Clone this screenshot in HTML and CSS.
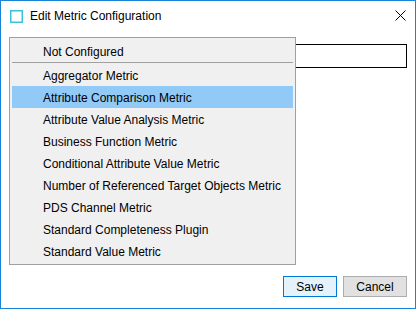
FILE: index.html
```html
<!DOCTYPE html>
<html lang="en">
<head>
    <meta charset="UTF-8">
    <meta name="viewport" content="width=device-width, initial-scale=1.0">
    <title>Edit Metric Configuration</title>
    <link rel="stylesheet" href="styles.css">
</head>
<body>
    <div class="window">
        <div class="titlebar">
            <svg class="app-icon" width="13" height="13" viewBox="0 0 13 13">
                <rect x="0.75" y="0.75" width="11.5" height="11.5" fill="none" stroke="#3cc3da" stroke-width="1.5"/>
            </svg>
            <span class="title">Edit Metric Configuration</span>
            <svg class="close-icon" width="11" height="11" viewBox="0 0 11 11">
                <path d="M0.5 0.5 L10.5 10.5 M10.5 0.5 L0.5 10.5" stroke="#000" stroke-width="1" fill="none"/>
            </svg>
        </div>

        <div class="content">
            <div class="metric-field"></div>
        </div>

        <div class="footer">
            <button type="button" class="btn btn-default">Save</button>
            <button type="button" class="btn">Cancel</button>
        </div>

        <!-- open dropdown of the metric field -->
        <ul class="menu">
            <li class="menu-item">Not Configured</li>
            <li class="menu-separator"></li>
            <li class="menu-item">Aggregator Metric</li>
            <li class="menu-item selected">Attribute Comparison Metric</li>
            <li class="menu-item">Attribute Value Analysis Metric</li>
            <li class="menu-item">Business Function Metric</li>
            <li class="menu-item">Conditional Attribute Value Metric</li>
            <li class="menu-item">Number of Referenced Target Objects Metric</li>
            <li class="menu-item">PDS Channel Metric</li>
            <li class="menu-item">Standard Completeness Plugin</li>
            <li class="menu-item">Standard Value Metric</li>
        </ul>
    </div>
</body>
</html>
```

FILE: styles.css
```css
* {
    box-sizing: border-box;
}
body {
    margin: 0;
    padding: 0;
    font-family: "Liberation Sans", Arial, sans-serif;
    font-size: 12px;
    color: #000;
    background: #fff;
}
.window {
    width: 416px;
    height: 309px;
    border: 1px solid #1883d7;
    background-color: #fff;
    display: flex;
    flex-direction: column;
    position: relative;
}
.titlebar {
    height: 29px;
    display: flex;
    align-items: center;
    padding: 0 9px 0 9px;
}
.app-icon {
    flex: none;
    margin-top: 1px;
}
.title {
    margin-left: 7px;
    flex: 1;
}
.close-icon {
    flex: none;
}
.content {
    flex: 1;
    padding: 14px 8px 0 9px;
}
.metric-field {
    height: 24px;
    border: 1px solid #000;
    background-color: #fff;
}
.footer {
    display: flex;
    justify-content: flex-end;
    gap: 6px;
    padding: 0 8px 11px 0;
}
.btn {
    height: 21px;
    min-width: 64px;
    padding: 1px 10px 0;
    font-family: inherit;
    font-size: 12px;
    color: #000;
    background-color: #e1e1e1;
    border: 1px solid #adadad;
    border-radius: 0;
}
.btn-default {
    min-width: 54px;
    background-color: #e5f1fb;
    border-color: #0078d7;
}
.menu {
    position: absolute; /* popup over the dialog */
    top: 36px;
    left: 8px;
    width: 287px;
    margin: 0;
    padding: 2px;
    list-style: none;
    background-color: #f0f0f0;
    border: 1px solid #a0a0a0;
}
.menu-item {
    height: 22px;
    line-height: 22px;
    padding: 1px 0 0 31px;
    white-space: nowrap;
}
.menu-item.selected {
    background-color: #91c9f7;
}
.menu-separator {
    height: 2px;
    border-top: 1px solid #a0a0a0;
}
```
